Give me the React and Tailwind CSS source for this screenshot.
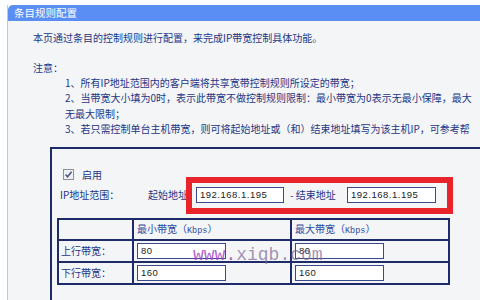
import React from 'react'

const cjk = "font-['Noto_Sans_CJK_SC','Liberation_Sans',sans-serif]"

function Field({ value, w = 'w-[89px]' }) {
  return (
    <div className={`${w} h-[16px] border border-[#3a4a8c] bg-white pl-[3px] flex items-center text-[9.5px] tracking-[0.5px] text-[#222] font-['Liberation_Sans',sans-serif]`}>
      {value}
    </div>
  )
}

function CheckBox() {
  return (
    <svg width="11" height="11" viewBox="0 0 11 11">
      <rect x="0.5" y="0.5" width="10" height="10" fill="#eef0f4" stroke="#8b8f9e" />
      <path d="M2.5 5.5 L4.6 7.8 L8.6 2.8" fill="none" stroke="#4d5a8c" strokeWidth="1.6" />
    </svg>
  )
}

function Head({ label }) {
  return (
    <div className="bg-[#f4f5f7] pl-[3px] flex items-center text-[#2d4aa0] whitespace-nowrap">
      <span>
        {label}（<span className="text-[8.5px] font-['Liberation_Mono',monospace]">Kbps</span>）
      </span>
    </div>
  )
}

export default function App() {
  const notes = [
    '1、所有IP地址范围内的客户端将共享宽带控制规则所设定的带宽；',
    '2、当带宽大小填为0时，表示此带宽不做控制规则限制：最小带宽为0表示无最小保障，最大',
    '无最大限制；',
    '3、若只需控制单台主机带宽，则可将起始地址或（和）结束地址填写为该主机IP，可参考帮',
  ]

  return (
    <div className={`relative w-[480px] h-[300px] overflow-hidden bg-white pt-[5px] pl-[7px] ${cjk} text-[10px]`}>
      <div className="h-[295px] border-l border-[#f3c56e] flex flex-col">
        <div className="h-[21px] bg-[#5b8ef5] rounded-tl-[5px] text-white pl-[6px] flex items-center text-[10.5px]">
          条目规则配置
        </div>
        <div className="flex-1 bg-[#f4f5f7] pt-[9px] text-[#1d3585]">
          <div className="h-[15px] leading-[15px] pl-[25px] whitespace-nowrap">
            本页通过条目的控制规则进行配置，来完成IP带宽控制具体功能。
          </div>
          <div className="mt-[15px] h-[15px] leading-[15px] pl-[25px]">注意：</div>
          <div className="pl-[57px]">
            {notes.map((n, i) => (
              <div key={i} className="h-[15.5px] leading-[15.5px] whitespace-nowrap">{n}</div>
            ))}
          </div>

          <div className="relative ml-[42px] mt-[10px] w-[520px] h-[200px] border-2 border-[#1e2b6b] pt-[19px]">
            <div className="h-[14px] pl-[11px] flex items-center gap-[8px]">
              <CheckBox />
              <span>启用</span>
            </div>
            <div className="mt-[5px] h-[16px] pl-[8px] flex items-center whitespace-nowrap">
              <span className="w-[88px]">IP地址范围：</span>
              <span className="w-[48px]">起始地址</span>
              <Field value="192.168.1.195" w="w-[88px]" />
              <span className="ml-[6px] w-[57px]">- 结束地址</span>
              <Field value="192.168.1.195" />
            </div>

            <div className="mt-[15px] ml-[5px] w-fit grid grid-cols-[73px_156px_156px] grid-rows-[19px_20px_20px] gap-[2px] p-[2px] bg-[#1e2b6b]">
              <div className="bg-[#f4f5f7]" />
              <Head label="最小带宽" />
              <Head label="最大带宽" />
              <div className="bg-[#f4f5f7] pl-[2px] flex items-center">上行带宽：</div>
              <div className="bg-[#f4f5f7] pl-[3px] flex items-center"><Field value="80" /></div>
              <div className="bg-[#f4f5f7] pl-[3px] flex items-center"><Field value="80" /></div>
              <div className="bg-[#f4f5f7] pl-[2px] flex items-center">下行带宽：</div>
              <div className="bg-[#f4f5f7] pl-[3px] flex items-center"><Field value="160" /></div>
              <div className="bg-[#f4f5f7] pl-[3px] flex items-center"><Field value="160" /></div>
            </div>

            <div className="absolute left-[134px] top-[28px] w-[267px] h-[37px] border-[6px] border-[#e8232a]" />
          </div>
        </div>
      </div>

      <div className="absolute left-[193px] top-[245px] leading-[20px] text-[18px] font-['Liberation_Mono',monospace] whitespace-nowrap">
        <span className="text-[#a03cc4]/80">www.</span>
        <span className="text-[#7a6590]/70">xiqb.com</span>
      </div>
    </div>
  )
}
